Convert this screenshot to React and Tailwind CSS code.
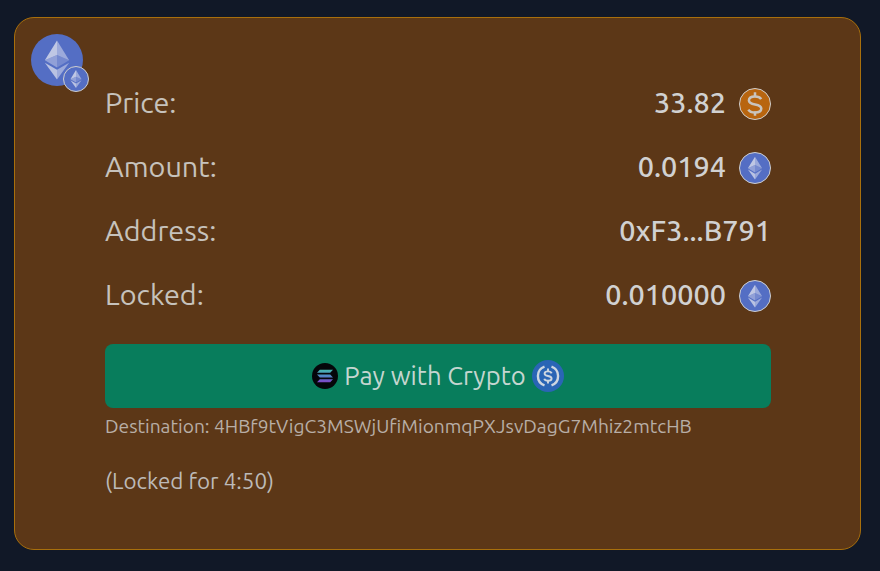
const FONT = "font-['Ubuntu','Noto_Sans',sans-serif]";

const ROWS = [
  { label: 'Price:', value: '33.82', icon: 'usd' },
  { label: 'Amount:', value: '0.0194', icon: 'eth' },
  { label: 'Address:', value: '0xF3...B791' },
  { label: 'Locked:', value: '0.010000', icon: 'eth' },
];

function EthGlyph({ className }) {
  return (
    <svg viewBox="0 0 32 32" className={className}>
      <path d="M16 3v9.6l8.1 3.6z" fill="#c3cbe8" fillOpacity="0.65" />
      <path d="M16 3L7.9 16.2l8.1-3.6z" fill="#d2d7ea" fillOpacity="0.85" />
      <path d="M16 22.5V29l8.1-11.2z" fill="#c3cbe8" fillOpacity="0.65" />
      <path d="M16 29v-6.5l-8.1-4.7z" fill="#d2d7ea" fillOpacity="0.8" />
      <path d="M16 21l8.1-4.8L16 12.6z" fill="#c3cbe8" fillOpacity="0.3" />
      <path d="M7.9 16.2L16 21v-8.4z" fill="#c3cbe8" fillOpacity="0.55" />
    </svg>
  );
}

function EthIcon() {
  return (
    <div className="w-8 h-8 mt-px rounded-full bg-[#546ec4] border border-[#cfcfcf] flex items-center justify-center">
      <EthGlyph className="w-[28px] h-[28px]" />
    </div>
  );
}

function UsdIcon() {
  return (
    <div className="w-8 h-8 mt-px rounded-full bg-[#b8650f] border border-[#cfcfcf] flex items-center justify-center">
      <svg viewBox="0 0 32 32" className="w-[30px] h-[30px] shrink-0" fill="none" stroke="#c9c4bd" strokeWidth="2.7">
        <path d="M16 3.5v4.5M16 24v4.5" />
        <path d="M22.6 10.8c-1.2-1.9-3.4-2.8-6.6-2.8-4 0-6.5 1.8-6.5 4.2 0 6 13.2 2.6 13.2 8.6 0 2.6-2.7 4.2-6.8 4.2-3.4 0-5.8-1.1-7-3.1" />
      </svg>
    </div>
  );
}

function SolanaIcon() {
  return (
    <svg viewBox="0 0 26 26" className="w-[26px] h-[26px]">
      <defs>
        <linearGradient id="sol" x1="0" y1="0" x2="0" y2="1">
          <stop offset="0" stopColor="#46b8ae" />
          <stop offset="0.5" stopColor="#4f86c4" />
          <stop offset="1" stopColor="#7f45c8" />
        </linearGradient>
      </defs>
      <circle cx="13" cy="13" r="13" fill="#05060a" />
      <path
        d="M7.8 6.8h13.2l-2.8 2.9H5zM5 11.6h13.2l2.8 2.8H7.8zM7.8 16.3h13.2l-2.8 2.9H5z"
        fill="url(#sol)"
      />
    </svg>
  );
}

function UsdcIcon() {
  return (
    <svg viewBox="0 0 32 32" className="w-8 h-8">
      <circle cx="16" cy="16" r="16" fill="#2a65b5" />
      <g fill="none" stroke="#cdd6e0">
        <path d="M12.5 6.6a10 10 0 0 0 0 18.8" strokeWidth="2.4" />
        <path d="M19.5 6.6a10 10 0 0 1 0 18.8" strokeWidth="2.4" />
        <path d="M16 8.6v2.8M16 20.6v2.8" strokeWidth="1.9" />
        <path d="M19.6 13.4c-.4-1.3-1.6-2-3.6-2-2.1 0-3.4.9-3.4 2.3 0 3.2 7 1.4 7 4.7 0 1.4-1.5 2.3-3.6 2.3-2 0-3.3-.7-3.7-2" strokeWidth="1.9" />
      </g>
    </svg>
  );
}

export default function App() {
  return (
    <div className={`min-h-screen bg-[#111827] pt-[17px] pl-[14px] pr-[19px] ${FONT}`}>
      <div className="relative h-[533px] bg-[#5c3717] border border-[#a86f0c] rounded-[20px] pl-[90px] pr-[89px] pt-[53px]">
        {/* Chain logo */}
        <div className="absolute left-4 top-4">
          <div className="w-[52px] h-[52px] rounded-full bg-[#546ec4] flex items-center justify-center">
            <EthGlyph className="w-[48px] h-[48px]" />
          </div>
          <div className="absolute -right-[6px] -bottom-[6px] w-[26px] h-[26px] rounded-full bg-[#546ec4] border border-[#cfcfcf] flex items-center justify-center">
            <EthGlyph className="w-[22px] h-[22px]" />
          </div>
        </div>

        {ROWS.map((row) => (
          <div key={row.label} className="flex items-center justify-between h-16 text-[28.8px] text-[#d1d1d1]">
            <span className="text-[#c6c2bc]">{row.label}</span>
            <div className="flex items-center gap-[13px]">
              <span className="font-medium">{row.value}</span>
              {row.icon === 'usd' && <UsdIcon />}
              {row.icon === 'eth' && <EthIcon />}
            </div>
          </div>
        ))}

        <div className="mt-[17px] h-16 rounded-lg bg-[#087d5c] flex items-center justify-center gap-[6px] text-[25.6px] text-[#c5d6d0]">
          <SolanaIcon />
          <span>Pay with Crypto</span>
          <UsdcIcon />
        </div>

        <p className="mt-1.5 text-[19.2px] leading-6 text-[#b8aea6]">
          Destination: 4HBf9tVigC3MSWjUfiMionmqPXJsvDagG7Mhiz2mtcHB
        </p>
        <p className="mt-[29px] text-[22.4px] leading-7 text-[#bdbab8]">(Locked for 4:50)</p>
      </div>
    </div>
  );
}
